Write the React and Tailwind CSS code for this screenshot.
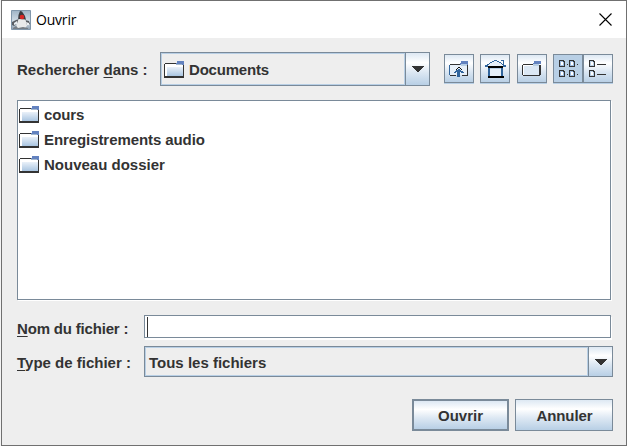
import React from "react";

const FONT = "font-['Liberation_Sans',Arial,sans-serif]";
const STEEL = "bg-[linear-gradient(180deg,#dde8f3_0%,#ffffff_30%,#dde8f3_60%,#b8cfe5_100%)]";

function Folder() {
  return (
    <svg width="20" height="17" viewBox="0 0 20 17" shapeRendering="crispEdges" className="block shrink-0">
      <defs>
        <linearGradient id="folderFill" x1="0" y1="0" x2="0" y2="1">
          <stop offset="0" stopColor="#eaf1f9" />
          <stop offset="1" stopColor="#a9c5e1" />
        </linearGradient>
      </defs>
      <path d="M1 3h18v12H1z" fill="#fff" />
      <path d="M3 6h16v9H3z" fill="url(#folderFill)" />
      <path d="M1 2h11v1H1zM0 3h1v12H0zM19 4h1v12h-1z" fill="#333" />
      <path d="M0 15h20v2H0z" fill="#333" />
      <path d="M13 0h7v4h-8V2h1z" fill="#6382bf" />
      <path d="M12 3h6v1h-6z" fill="#a3b8cc" />
    </svg>
  );
}

function UpFolder() {
  return (
    <svg width="20" height="17" viewBox="0 -1 20 17" shapeRendering="crispEdges" className="block">
      <path d="M1 4h17v10H1z" fill="#e8f0f8" />
      <path d="M1 3h11v1H1zM18 4h1v11h-1zM1 14h6v1H1zM13 14h5v1h-5z" fill="#333" />
      <path d="M0 4h1v10H0z" fill="#31659c" />
      <path d="M12 0h7v4h-8V2h1z" fill="#6382bf" />
      <path d="M12 3h6v2h-6z" fill="#b8cfe5" />
      <path d="M9 8h2v1h1v1h2v1h1v1h-3v-1h-1v5H8v-5H7v1H5v-1h1v-1h1V9h2z" fill="#31659c" />
      <path d="M9 6h2v1h1v1h1v1h-1V8h-1V7H9v1H8v1H7V8h1V7h1z" fill="#111" />
    </svg>
  );
}

function House() {
  return (
    <svg width="22" height="19" viewBox="0 0 22 19" shapeRendering="crispEdges" className="block">
      <path d="M9 2h3v1h2v1h2v1h1v2H4V5h1V4h2V3h2zM4 9h13v8H4z" fill="#e6eff8" />
      <path
        d="M9 1h3v1H9zM7 2h2v1H7zM12 2h2v1h-2zM5 3h2v1H5zM14 3h2v1h-2zM4 4h1v1H4zM16 4h1v1h-1zM2 5h2v1H2zM17 5h2v1h-2zM0 6h3v2H0zM18 6h3v2h-3zM16 1h2v1h-2zM18 1h1v4h-1zM3 8h2v9H3zM16 8h2v9h-2z"
        fill="#31659c"
      />
      <path d="M3 7h15v2H3zM3 17h16v2H3z" fill="#000" />
      <path d="M5 9h11v1H5z" fill="#b8cfe5" />
    </svg>
  );
}

function NewFolder() {
  return (
    <svg width="20" height="15" viewBox="0 0 20 15" shapeRendering="crispEdges" className="block">
      <path d="M1 4h16v10H1z" fill="#fff" />
      <path d="M2 5h15v9H2z" fill="#dce8f4" />
      <path d="M1 3h10v1H1zM0 4h1v10H0zM1 14h17v1H1zM17 4h2v10h-2z" fill="#333" />
      <path d="M12 0h7v3h-8V2h1z" fill="#6382bf" />
      <path d="M11 3h6v2h-6z" fill="#b8cfe5" />
    </svg>
  );
}

function GridView() {
  return (
    <svg width="20" height="17" viewBox="0 0 20 17" shapeRendering="crispEdges" className="block">
      {[[0, 0], [10, 0], [0, 10], [10, 10]].map(([x, y]) => (
        <g key={`${x}-${y}`}>
          <path d={`M${x} ${y}h5v1h1v6h-6z`} fill="#333" />
          <path d={`M${x + 1} ${y + 1}h3v1h1v4h-4z`} fill="#9dbbe0" />
          <path d={`M${x + 2} ${y + 2}h2v3h-2z`} fill="#fff" />
          <path d={`M${x + 8} ${y + 4}h1v1h-1z`} fill="#333" />
        </g>
      ))}
    </svg>
  );
}

function ListView() {
  return (
    <svg width="18" height="17" viewBox="0 0 18 17" shapeRendering="crispEdges" className="block">
      {[0, 10].map((y) => (
        <g key={y}>
          <path d={`M0 ${y}h5v1h1v6h-6z`} fill="#333" />
          <path d={`M1 ${y + 1}h3v1h1v4h-4z`} fill="#b8cfe5" />
          <path d={`M2 ${y + 2}h2v3h-2z`} fill="#fff" />
          <path d={`M8 ${y + 4}h9v1h-9z`} fill="#333" />
        </g>
      ))}
    </svg>
  );
}

function Arrow() {
  return (
    <svg width="12" height="6" viewBox="0 0 12 6" shapeRendering="crispEdges" className="block">
      <path d="M0 0h12v1h-1v1h-1v1h-1v1h-1v1h-1v1H5V5H4V4H3V3H2V2H1V1H0z" fill="#333" />
    </svg>
  );
}

function JavaLogo() {
  return (
    <svg width="20" height="20" viewBox="0 0 20 20" className="block">
      <defs>
        <linearGradient id="logoFill" x1="0" y1="0" x2="0" y2="1">
          <stop offset="0" stopColor="#9fb4c6" />
          <stop offset="0.6" stopColor="#d3dee7" />
          <stop offset="1" stopColor="#8b9dae" />
        </linearGradient>
      </defs>
      <path d="M.5.5h19v19H.5z" fill="url(#logoFill)" stroke="#8197ab" />
      <path d="M1 12l4-2 3-1-1 4-4 3-2-1zM14 10l4 1 1 3-3 1-2-2z" fill="#595d62" />
      <path d="M3 13l3-2v3l-3 1z" fill="#e8edf1" />
      <path d="M9 1l2 .5L14 6l1 4-8 1 .5-6z" fill="#383a3f" />
      <path d="M7.500 9l7 .5 1.500 6-2 3-8 .500-.5-4z" fill="#e9eaea" />
      <path d="M15 12l3 1v2l-2 0z" fill="#eef1f3" />
      <circle cx="11" cy="7" r="2.300" fill="#d92725" />
      <path d="M2 18l3-2 2 2 5-1 5 1v1H2z" fill="#777e85" />
    </svg>
  );
}

function ToolButton({ className = "", children }) {
  return (
    <button className={`box-border flex h-[29px] w-[30px] shrink-0 items-center justify-center border border-[#7a8a99] shadow-[0_1px_0_#b8cfe5] ${className}`}>
      {children}
    </button>
  );
}

function Combo({ className, children }) {
  return (
    <div className={`box-border flex border border-[#7a8a99] ${className}`}>
      <div className="flex min-w-0 grow items-center border border-[#b8cfe5]">{children}</div>
      <div className={`flex w-[24px] shrink-0 items-center justify-center border-l border-[#7a8a99] ${STEEL}`}>
        <Arrow />
      </div>
    </div>
  );
}

function Mnemonic({ children }) {
  return <span className="underline decoration-1 underline-offset-2">{children}</span>;
}

export default function App() {
  const files = [
    ["cours", "tracking-[-0.1px]"],
    ["Enregistrements audio", "tracking-[-0.08px]"],
    ["Nouveau dossier", ""],
  ];
  return (
    <div className="h-[446px] w-[627px] bg-[#f4f4f4] pl-px">
      <div className={`box-border flex h-[446px] w-[626px] flex-col border border-[#707070] bg-[#eeeeee] text-[15px] font-bold leading-[18px] text-[#333333] ${FONT}`}>
        <header className="flex h-[37px] shrink-0 items-center bg-white pl-[9px] pr-[14px]">
          <JavaLogo />
          <span className="ml-[5px] grow font-['Open_Sans','Noto_Sans',sans-serif] text-[14px] font-normal tracking-[-0.2px] text-black">Ouvrir</span>
          <svg width="13" height="13" viewBox="0 0 13 13" className="block">
            <path d="M.5.5l12 12M12.500.5l-12 12" stroke="#000" strokeWidth="1.100" />
          </svg>
        </header>
        <main className="flex grow flex-col pl-[15px] pr-[12px] pt-[14px]">
          <div className="flex h-[34px] shrink-0 items-start">
            <label className="mt-[9px] w-[143px] whitespace-nowrap tracking-[-0.02px]">Rechercher <Mnemonic>d</Mnemonic>ans :</label>
            <Combo className="h-[34px] w-[270px] shrink-0">
              <span className="ml-[2px] flex items-center gap-[5px]">
                <Folder />
                <span className="mt-[2px] tracking-[-0.2px]">Documents</span>
              </span>
            </Combo>
            <div className="ml-[14px] mt-[2px] flex">
              <ToolButton className={STEEL}><UpFolder /></ToolButton>
              <ToolButton className={`ml-[6px] pl-[2px] ${STEEL}`}><House /></ToolButton>
              <ToolButton className={`ml-[7px] ${STEEL}`}><NewFolder /></ToolButton>
              <ToolButton className="ml-[6px] bg-[#b8cfe5] pl-[2px]"><GridView /></ToolButton>
              <ToolButton className={STEEL}><ListView /></ToolButton>
            </div>
          </div>
          <ul className="mt-[14px] box-border h-[200px] w-[594px] shrink-0 border border-[#7a8a99] bg-white pl-px pt-px shadow-[1px_1px_0_#ffffff]">
            {files.map(([name, tracking]) => (
              <li key={name} className="flex h-[25px] items-center">
                <Folder />
                <span className={`ml-[5px] ${tracking}`}>{name}</span>
              </li>
            ))}
          </ul>
          <div className="mt-[15px] flex h-[23px] shrink-0 items-center">
            <label className="mt-[4px] w-[127px] whitespace-nowrap tracking-[-0.18px]"><Mnemonic>N</Mnemonic>om du fichier :</label>
            <div className="box-border h-[23px] w-[467px] border border-[#7a8a99] bg-white pl-[2px] pt-px shadow-[1px_2px_0_#ffffff]">
              <div className="h-[20px] w-px bg-[#333333]" />
            </div>
          </div>
          <div className="mt-[8px] flex h-[31px] shrink-0 items-center">
            <label className="mt-[3px] w-[127px] whitespace-nowrap"><Mnemonic>T</Mnemonic>ype de fichier :</label>
            <Combo className="h-[31px] w-[469px] shrink-0">
              <span className="ml-[3px] mt-[3px]">Tous les fichiers</span>
            </Combo>
          </div>
          <div className="mt-[22px] flex justify-end gap-[6px] pr-px">
            <button className={`box-border h-[32px] w-[97px] border-2 border-[#7a8a99] pt-px ${STEEL}`}>Ouvrir</button>
            <button className={`box-border h-[32px] w-[98px] border border-[#7a8a99] pl-px pt-px tracking-[-0.1px] ${STEEL}`}>Annuler</button>
          </div>
        </main>
      </div>
    </div>
  );
}
